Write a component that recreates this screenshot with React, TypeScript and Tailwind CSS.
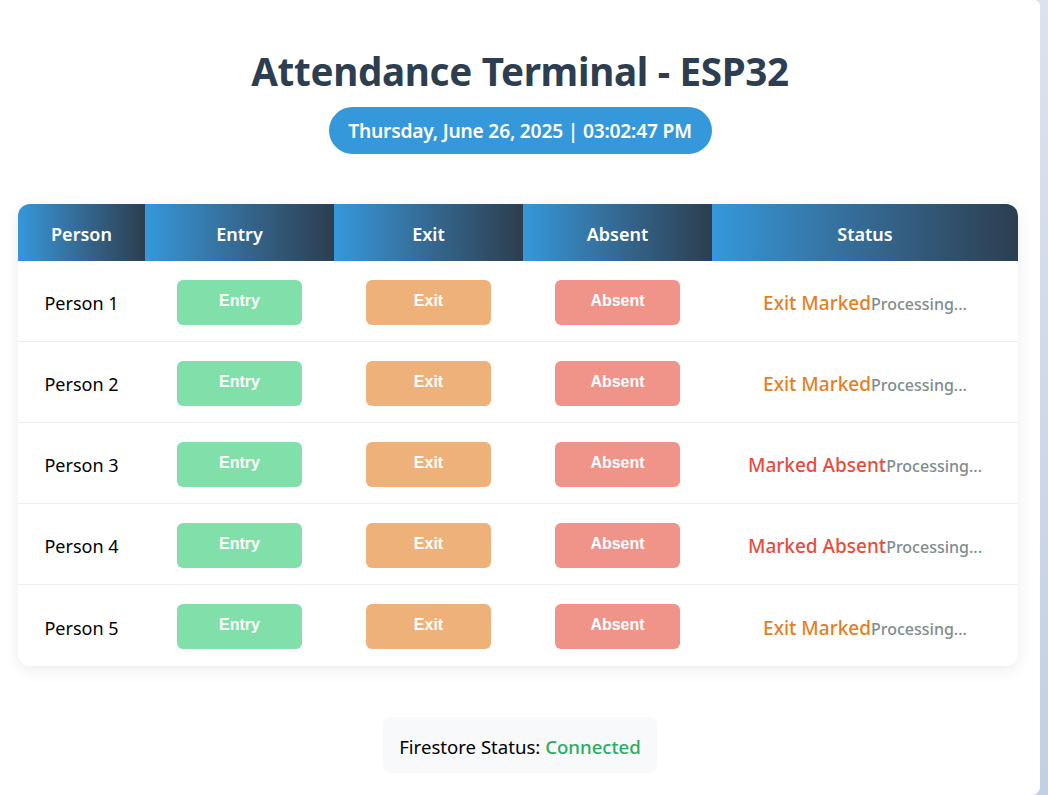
import React from "react"

const people = [
  { name: "Person 1", status: "Exit Marked", tone: "text-[#e67e22]" },
  { name: "Person 2", status: "Exit Marked", tone: "text-[#e67e22]" },
  { name: "Person 3", status: "Marked Absent", tone: "text-[#e74c3c]" },
  { name: "Person 4", status: "Marked Absent", tone: "text-[#e74c3c]" },
  { name: "Person 5", status: "Exit Marked", tone: "text-[#e67e22]" },
]

const headers = [
  { label: "Person", w: "w-[127px]" },
  { label: "Entry", w: "w-[189px]" },
  { label: "Exit", w: "w-[189px]" },
  { label: "Absent", w: "w-[189px]" },
  { label: "Status", w: "flex-1" },
]

function ActionButton({ label, color }: { label: string; color: string }) {
  return (
    <button
      disabled
      className={`w-[125px] h-[45px] rounded-md ${color} opacity-60 text-white font-bold text-[16px] pb-[3px] font-['Liberation_Sans',Arial,sans-serif]`}
    >
      {label}
    </button>
  )
}

export default function App() {
  return (
    <div className="w-full h-[795px] overflow-hidden bg-gradient-to-br from-[#f5f7fa] to-[#c3cfe2] font-['Noto_Sans',sans-serif]">
      <div className="w-[1040px] h-[795px] bg-white rounded-br-lg rounded-tr-md flex flex-col items-center">
        {/* Header */}
        <h1 className="mt-[46px] text-[38.6px] leading-[50px] font-bold text-[#2c3e50] tracking-[-0.3px]">
          Attendance Terminal - ESP32
        </h1>
        <div className="mt-[11px] h-[47px] w-[383px] rounded-full bg-[#3498db] flex items-center justify-center text-white font-semibold text-[19.2px] tracking-[-0.2px] pt-[2px]">
          Thursday, June 26, 2025 | 03:02:47 PM
        </div>

        {/* Table */}
        <div className="mt-[50px] w-[1000px] self-start ml-[18px] rounded-xl overflow-hidden bg-white shadow-[0_4px_16px_rgba(0,0,0,0.08)]">
          <div className="flex h-[57px]">
            {headers.map((h) => (
              <div
                key={h.label}
                className={`${h.w} bg-gradient-to-r from-[#3498db] to-[#2c3e50] flex items-center justify-center text-white font-semibold text-[18px] pt-[3px]`}
              >
                {h.label}
              </div>
            ))}
          </div>
          {people.map((p, i) => (
            <div
              key={p.name}
              className={`flex h-[81px] items-center ${i < people.length - 1 ? "border-b border-[#eeeeee]" : ""}`}
            >
              <div className="w-[127px] text-center text-[18px] text-black pt-[5px]">{p.name}</div>
              <div className="w-[189px] flex justify-center pt-[2px]">
                <ActionButton label="Entry" color="bg-[#2ecc71]" />
              </div>
              <div className="w-[189px] flex justify-center pt-[2px]">
                <ActionButton label="Exit" color="bg-[#e67e22]" />
              </div>
              <div className="w-[189px] flex justify-center pt-[2px]">
                <ActionButton label="Absent" color="bg-[#e74c3c]" />
              </div>
              <div className="flex-1 text-center pt-[5px]">
                <span className={`${p.tone} font-medium text-[19px]`}>{p.status}</span>
                <span className="text-[#7f8c8d] font-medium text-[16px]">Processing...</span>
              </div>
            </div>
          ))}
        </div>

        {/* Firestore status */}
        <div className="mt-[51px] h-[56px] px-[16px] pt-[3px] rounded-lg bg-[#f8f9fa] flex items-center text-[18.6px] text-black">
          Firestore Status:&nbsp;<span className="text-[#27ae60] font-medium">Connected</span>
        </div>
      </div>
    </div>
  )
}
